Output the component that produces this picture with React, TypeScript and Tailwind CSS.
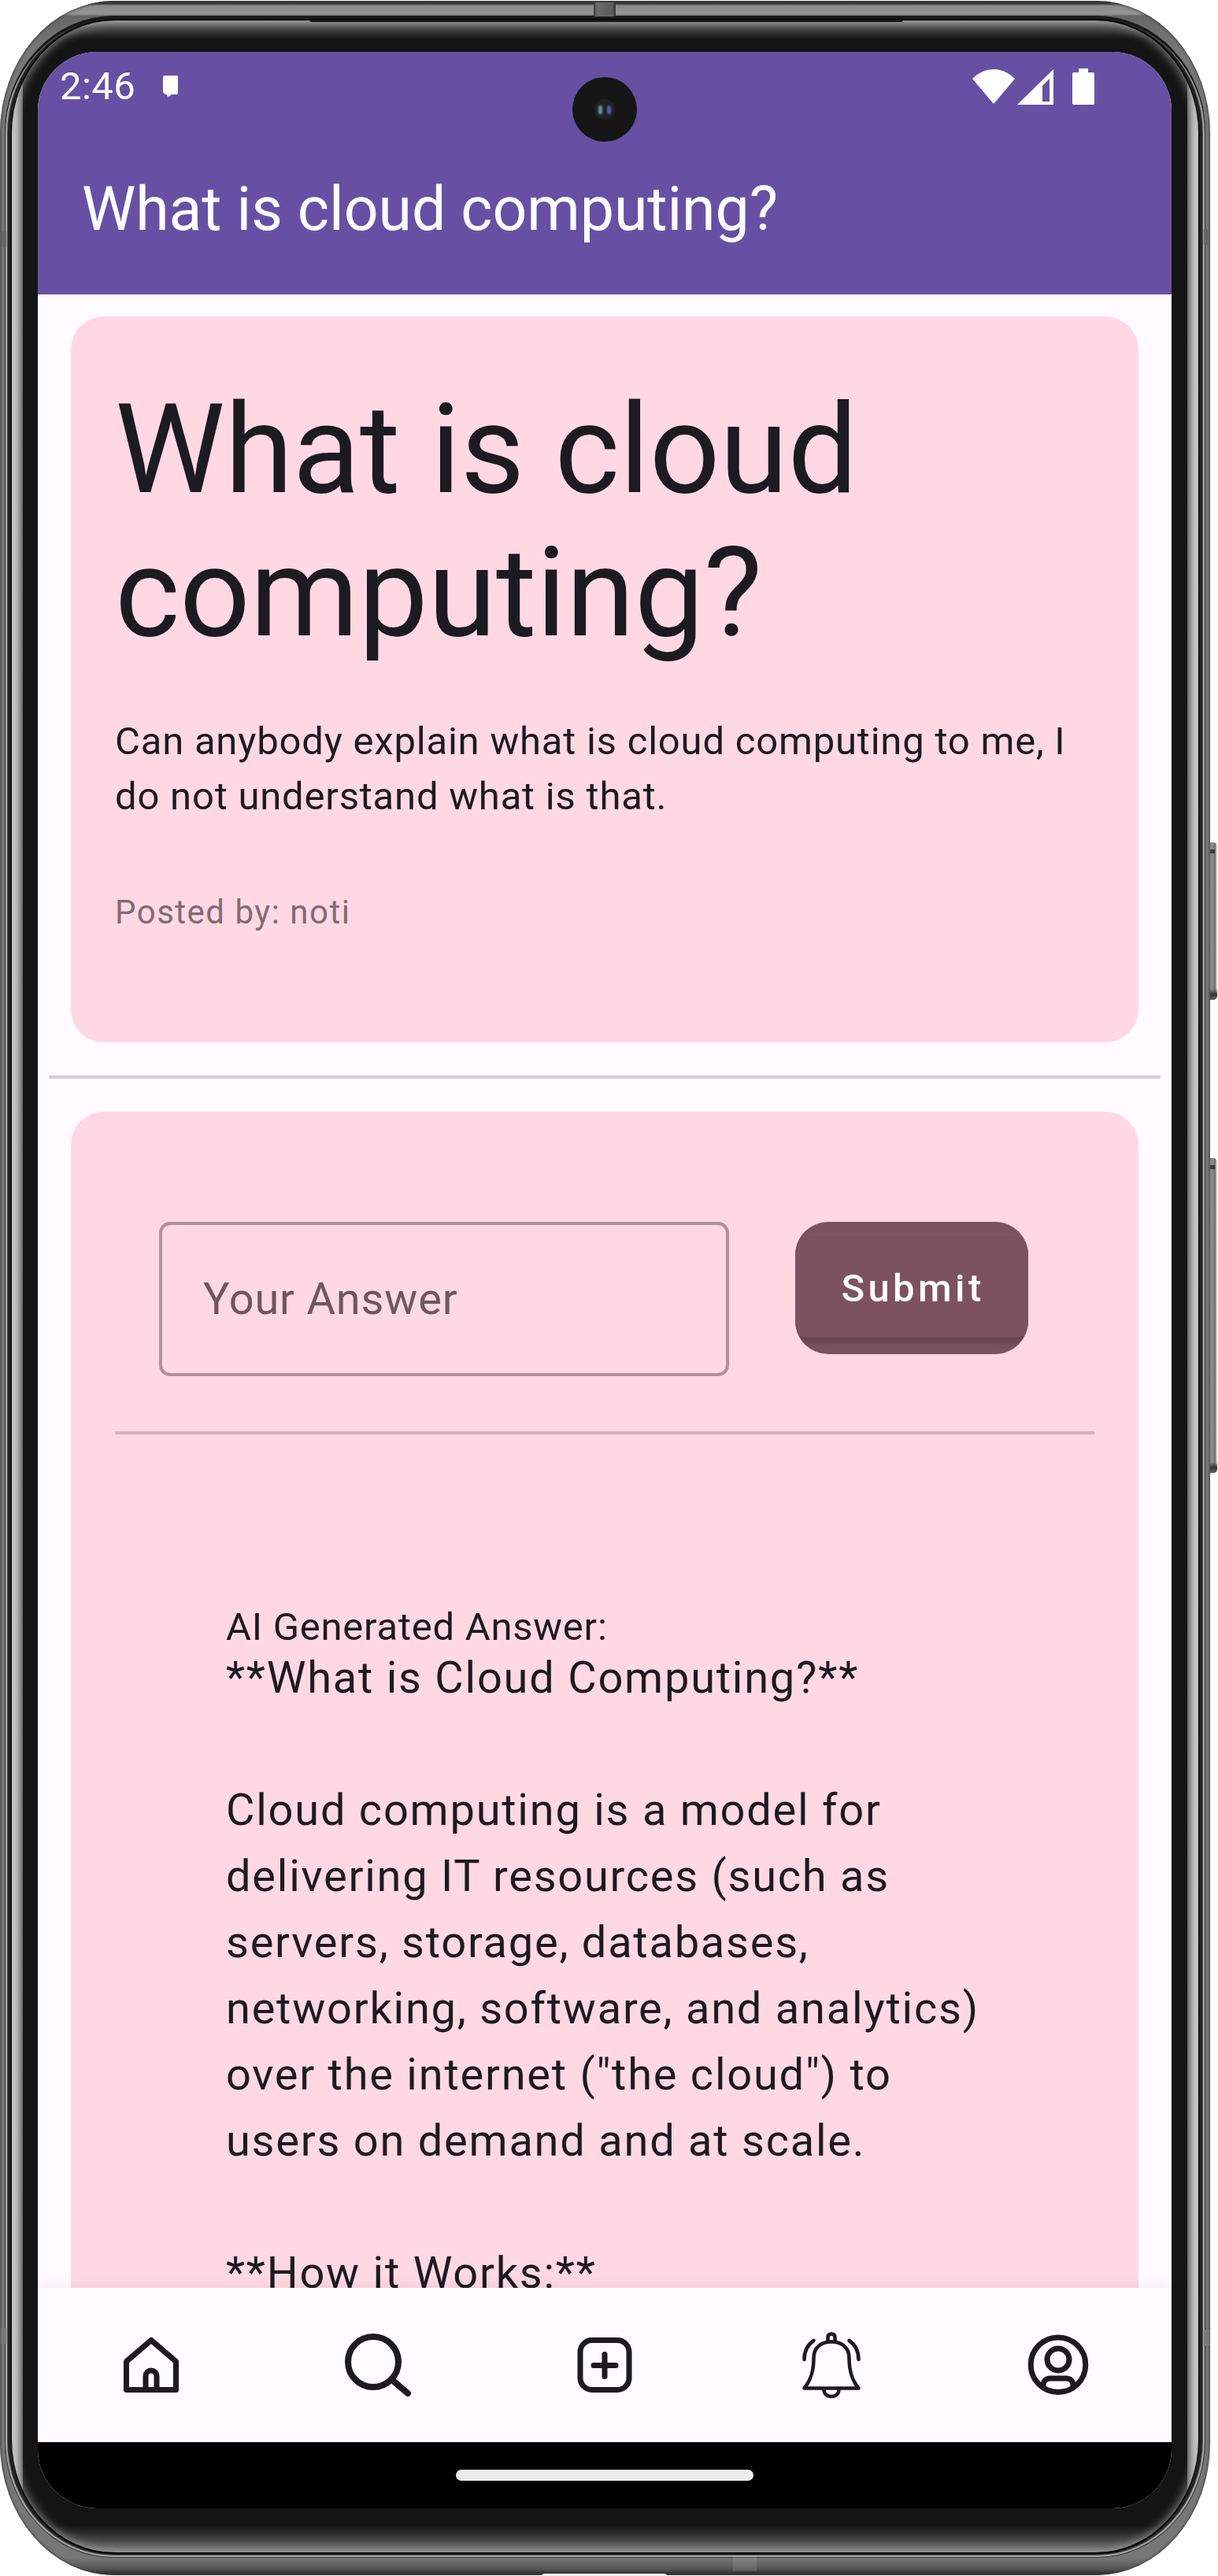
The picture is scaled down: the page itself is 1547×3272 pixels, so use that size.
import type { ReactNode } from "react";

const answerText = `**What is Cloud Computing?**

Cloud computing is a model for
delivering IT resources (such as
servers, storage, databases,
networking, software, and analytics)
over the internet ("the cloud") to
users on demand and at scale.

**How it Works:**`;

function NavIcon({ label, children }: { label: string; children: ReactNode }) {
  return (
    <button aria-label={label} className="flex w-[288px] items-center justify-center">
      <svg
        width="84"
        height="84"
        viewBox="0 0 84 84"
        fill="none"
        stroke="#1c1b1f"
        strokeWidth="7"
        strokeLinecap="round"
        strokeLinejoin="round"
        overflow="visible"
      >
        {children}
      </svg>
    </button>
  );
}

function StatusBar() {
  return (
    <div className="flex h-[84px] items-center pt-1 pr-[98px] pl-[28px] text-white">
      <span className="text-[49px] leading-[56px] tracking-[0.4px]">2:46</span>
      <svg className="ml-[35px]" width="19" height="28" viewBox="0 0 19 28" fill="currentColor">
        <path d="M2 0h15q2 0 2 2v20q0 2-2 2H10l-1 3-1.500-2-1 3-1.500-4H3L0 21V2q0-2 2-2z" />
      </svg>
      <svg className="ml-auto" width="54" height="46" viewBox="0 0 54 46" fill="currentColor">
        <path d="M0 13Q12 1 27 1t27 12L27 45z" />
      </svg>
      <svg className="ml-[3px]" width="46" height="46" viewBox="0 0 46 46" fill="currentColor">
        <path fillRule="evenodd" d="M46 1v45H0zM41 13 32 22v20h9z" />
      </svg>
      <svg className="ml-[24px]" width="28" height="46" viewBox="0 0 28 46" fill="currentColor">
        <path d="M8 0h12v5h6q2 0 2 2v37q0 2-2 2H2q-2 0-2-2V7q0-2 2-2h6z" />
      </svg>
    </div>
  );
}

function Screen() {
  return (
    <div className="flex h-[3120px] w-[1440px] flex-col overflow-hidden rounded-[75px] bg-[#fffbfe]">
      <header className="h-[308px] shrink-0 bg-[#6750a4]">
        <StatusBar />
        <h1 className="pt-[67px] pl-[56px] text-[77px] leading-[98px] tracking-[-0.08px] text-[#fffbfe]">
          What is cloud computing?
        </h1>
      </header>

      <main className="flex h-[2532px] shrink-0 flex-col overflow-hidden pt-[28px]">
        <section className="mx-[42px] h-[922px] shrink-0 rounded-[42px] bg-[#ffd8e4] px-[56px] pt-[78px]">
          <h2 className="text-[157.5px] leading-[182px] tracking-[-0.35px]">
            What is cloud
            <br />
            computing?
          </h2>
          <p className="mt-[63px] text-[49px] leading-[70px] tracking-[0.79px] whitespace-nowrap">
            Can anybody explain what is cloud computing to me, I
            <br />
            do not understand what is that.
          </p>
          <p className="mt-[84px] text-[42px] leading-[56px] tracking-[1.5px] text-[#806c74]">Posted by: noti</p>
        </section>

        <hr className="mx-[14px] my-[42px] h-[4px] shrink-0 border-0 bg-[#d2cfd3]" />

        <section className="mx-[42px] h-[1600px] shrink-0 rounded-t-[42px] bg-[#ffd8e4] px-[56px] pt-[140px]">
          <div className="flex items-start gap-[84px] px-[56px]">
            <div className="flex h-[196px] w-[724px] items-center rounded-[14px] border-4 border-[#ae919a] px-[52px] text-[56px] leading-[84px] tracking-[0.8px] text-[#6b5960]">
              Your Answer
            </div>
            <button className="h-[168px] w-[296px] overflow-hidden rounded-[42px] bg-[#7d5260] py-[21px]">
              <span className="flex h-[126px] items-center justify-center rounded-[14px] bg-[#7d5260] pt-[2px] pl-[3px] text-[49px] leading-[70px] font-medium tracking-[4.375px] text-white shadow-[0_6px_10px_rgba(0,0,0,0.2)]">
                Submit
              </span>
            </button>
          </div>
          <hr className="mt-[70px] h-[4px] border-0 bg-[#d2b2bd]" />
          <div className="mt-[223px] pl-[141px]">
            <p className="text-[49px] leading-[44px] tracking-[0.75px]">AI Generated Answer:</p>
            <p className="text-[56px] leading-[84px] tracking-[1.75px] whitespace-pre">{answerText}</p>
          </div>
        </section>
      </main>

      <nav className="relative flex h-[196px] shrink-0 bg-[#fffbfe] shadow-[0_-2px_14px_rgba(0,0,0,0.07)]">
        <NavIcon label="Home">
          <path d="M10.500 37.500 42 10.500l31.500 27v36h-63zM35 73V56a7 7 0 0 1 14 0v17" />
        </NavIcon>
        <NavIcon label="Search">
          <g strokeWidth="8">
            <circle cx="36" cy="38" r="32" />
            <path d="M59 60 80 78" />
          </g>
        </NavIcon>
        <NavIcon label="Add">
          <rect x="11" y="10.500" width="62" height="63" rx="15" />
          <path d="M42 28.500v28M28 42.500h28" />
        </NavIcon>
        <NavIcon label="Notifications">
          <g strokeWidth="4.600">
            <path d="M37.500 12V7q0-4.500 4.500-4.500T46.500 7v5" />
            <path d="M7.500 71.500h69C68 61 64.500 50 64.500 33c0-13-9-20.500-22.500-20.500S19.500 20 19.500 33C19.500 50 16 61 7.500 71.500z" />
            <path d="M32.500 73c0 5.500 4 9 9.500 9s9.500-3.500 9.500-9M19.500 11Q7.500 19 7.500 35M64.500 11Q76.500 19 76.500 35" />
          </g>
        </NavIcon>
        <NavIcon label="Profile">
          <circle cx="42" cy="41.700" r="34.800" />
          <circle cx="42" cy="35" r="14" />
          <path d="M23 68c0-5 3-9 9-9h20c6 0 9 4 9 9" />
        </NavIcon>
      </nav>

      <footer className="flex h-[84px] shrink-0 items-center justify-center bg-black">
        <div className="h-[14px] w-[378px] rounded-full bg-[#ebebeb]" />
      </footer>
    </div>
  );
}

function SideButton({ className }: { className: string }) {
  return (
    <div
      className={
        "absolute left-[1533px] w-[13px] rounded-r-[5px] bg-[linear-gradient(to_right,#4a4a4a,#8c8c8c_2px,#858585_9px,#555_10px,#cfcfcf_12px)] " +
        className
      }
    >
      <div className="mt-[9px] ml-[3px] h-[5px] w-[7px] bg-[#3c3c3c]" />
      <div className="absolute bottom-0 h-[14px] w-full rounded-br-[5px] bg-linear-to-b from-transparent via-[#333] to-[#666]" />
    </div>
  );
}

export default function App() {
  return (
    <div className="relative h-[3272px] w-[1547px] overflow-hidden bg-white pt-px font-['Roboto',sans-serif] text-[#1c1b1f]">
      <SideButton className="top-[1070px] h-[200px]" />
      <SideButton className="top-[1471px] h-[400px]" />

      {/* Metal band */}
      <div className="relative h-[3270px] w-[1537px] rounded-[145px/168px] bg-[linear-gradient(to_bottom,#2b2e2c_0,#3a3a3a_4px,#8a8a8a_6px,#949494_17px,#666_19px,#777_60px,#777_3200px,#777_3248px,#555_3262px,#222_3270px)] px-[6px] pt-[19px] pb-[22px] shadow-[inset_0_0_3px_1px_#444]">
        {/* Seam between band and glass */}
        <div className="h-full rounded-[139px/149px] bg-[#222] px-[8px] pt-[4px] pb-[5px] shadow-[inset_0_4px_0_#191919,inset_0_0_0_1px_#333,inset_0_0_0_3px_#a6a6a6,inset_0_0_0_4px_#555]">
          <div className="h-full rounded-[131px/145px] bg-black px-px py-[2px]">
            {/* Glass edge reflection */}
            <div className="h-full rounded-[130px/143px] bg-[linear-gradient(to_right,#d8d8d8,#c4c4c4_5px,#666_14px,transparent_14px,transparent_calc(100%-14px),#666_calc(100%-14px),#c4c4c4_calc(100%-5px),#d8d8d8),linear-gradient(to_bottom,#868686,#4a4a4a_9px,#141414_24px,#141414_calc(100%-34px),#444_calc(100%-16px),#7c7c7c)] pt-[40px] pr-[34px] pl-[33px] shadow-[inset_0_0_14px_#a8a8a8]">
              <Screen />
            </div>
          </div>
        </div>
      </div>

      {/* Antenna gaps, speaker slit and port */}
      <div className="absolute top-[3px] left-[754px] h-[18px] w-[28px] bg-[linear-gradient(to_right,#333,#6b6b6b_4px,#5c5c5c_24px,#333)]" />
      <div className="absolute top-[25px] left-[393px] h-[3px] w-[754px] rounded-b-full bg-[#1a1a1a]" />
      <div className="absolute top-[294px] left-[1px] h-[20px] w-[7px] bg-[#666]" />
      <div className="absolute top-[2957px] left-[1px] h-[20px] w-[7px] bg-[#777]" />
      <div className="absolute top-[291px] left-[1529px] h-[20px] w-[7px] bg-[#666]" />
      <div className="absolute top-[2959px] left-[1529px] h-[20px] w-[7px] bg-[#777]" />
      <div className="absolute top-[3246px] left-[931px] h-[20px] w-[30px] bg-white/10" />
      <div className="absolute top-[3269px] left-[686px] h-[6px] w-[163px] rounded-t-[8px] bg-[#f0f0f0]" />

      {/* Front camera */}
      <div className="absolute top-[98px] left-[727px] flex size-[82px] items-center justify-center rounded-full bg-[#161616]">
        <div className="flex size-[26px] items-center justify-between rounded-full bg-[#202020] px-[5px]">
          <div className="h-[11px] w-[5px] rounded-full bg-[#5a9aa5] blur-[1px]" />
          <div className="h-[11px] w-[5px] rounded-full bg-[#4a63b8] blur-[1px]" />
        </div>
      </div>
    </div>
  );
}
